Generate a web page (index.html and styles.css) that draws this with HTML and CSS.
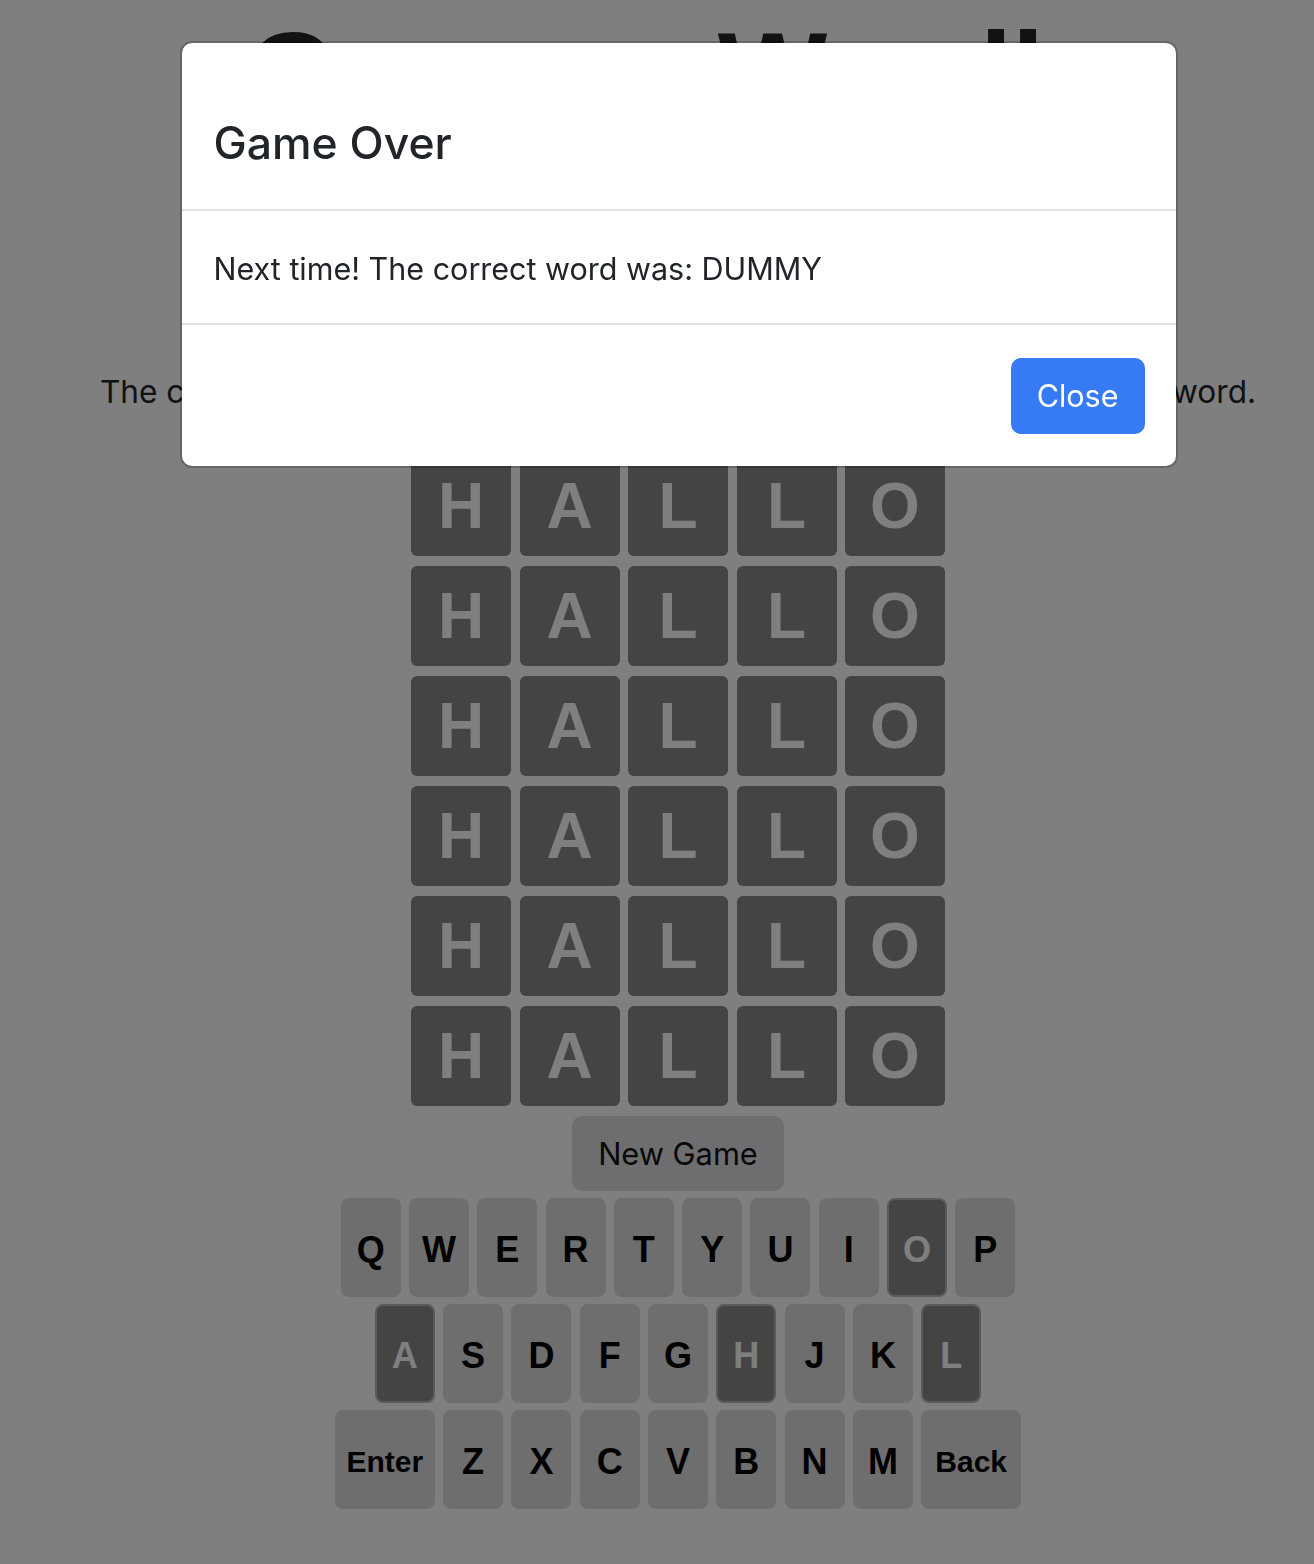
FILE: index.html
```html
<!DOCTYPE html>
<html lang="en">
<head>
<meta charset="utf-8">
<title>German Wordle</title>
<link rel="stylesheet" href="styles.css">
</head>
<body>
<div class="page">
  <h1 class="title">German Wordle</h1>
  <p class="intro">The computer has picked a random German five-letter word. Guess the word.</p>
  <div class="board">
    <div class="tile">H</div><div class="tile">A</div><div class="tile">L</div><div class="tile">L</div><div class="tile">O</div>
    <div class="tile">H</div><div class="tile">A</div><div class="tile">L</div><div class="tile">L</div><div class="tile">O</div>
    <div class="tile">H</div><div class="tile">A</div><div class="tile">L</div><div class="tile">L</div><div class="tile">O</div>
    <div class="tile">H</div><div class="tile">A</div><div class="tile">L</div><div class="tile">L</div><div class="tile">O</div>
    <div class="tile">H</div><div class="tile">A</div><div class="tile">L</div><div class="tile">L</div><div class="tile">O</div>
    <div class="tile">H</div><div class="tile">A</div><div class="tile">L</div><div class="tile">L</div><div class="tile">O</div>
  </div>
  <button class="new-game">New Game</button>
  <div class="keyboard">
    <div class="krow">
      <button class="key">Q</button><button class="key">W</button><button class="key">E</button><button class="key">R</button><button class="key">T</button><button class="key">Y</button><button class="key">U</button><button class="key">I</button><button class="key absent">O</button><button class="key">P</button>
    </div>
    <div class="krow">
      <button class="key absent">A</button><button class="key">S</button><button class="key">D</button><button class="key">F</button><button class="key">G</button><button class="key absent">H</button><button class="key">J</button><button class="key">K</button><button class="key absent">L</button>
    </div>
    <div class="krow">
      <button class="key wide">Enter</button><button class="key">Z</button><button class="key">X</button><button class="key">C</button><button class="key">V</button><button class="key">B</button><button class="key">N</button><button class="key">M</button><button class="key wide">Back</button>
    </div>
  </div>
</div>

<div class="backdrop"></div>

<div class="modal-wrap">
  <div class="modal">
    <div class="modal-header">
      <h2 class="modal-title">Game Over</h2>
    </div>
    <div class="modal-body">Next time! The correct word was: DUMMY</div>
    <div class="modal-footer">
      <button class="btn-close">Close</button>
    </div>
  </div>
</div>
</body>
</html>
```
FILE: styles.css
```css
* { box-sizing: border-box; }

html, body {
  margin: 0;
  padding: 0;
  background: #ffffff;
}

body {
  font-family: "Inter", "Noto Sans", sans-serif;
  color: #212529;
  width: 1314px;
  height: 1564px;
  overflow: hidden;
}

.page {
  padding: 7px 0 0 42px;
  display: flex;
  flex-direction: column;
  align-items: center;
}

.title {
  margin: 0;
  font-family: "Liberation Sans", Arial, sans-serif;
  font-weight: 700;
  font-size: 116px;
  line-height: 134px;
  color: #212529;
  white-space: nowrap;
}

.intro {
  margin: 227px 0 0;
  font-size: 31.6px;
  line-height: 48px;
  white-space: nowrap;
}

.board {
  margin-top: 40px;
  display: grid;
  grid-template-columns: repeat(5, 100px);
  grid-auto-rows: 100px;
  column-gap: 8.5px;
  row-gap: 10px;
}

.tile {
  background: #888888;
  border-radius: 6px;
  color: #ffffff;
  font-family: "Liberation Sans", Arial, sans-serif;
  font-weight: 700;
  font-size: 64px;
  display: flex;
  align-items: center;
  justify-content: center;
}

.new-game {
  margin-top: 10px;
  height: 75px;
  padding: 0 26px;
  border: none;
  border-radius: 10px;
  background: #dcdde0;
  color: #111111;
  font-family: "Inter", sans-serif;
  font-size: 30.8px;
  line-height: 75px;
}

.keyboard {
  margin-top: 7px;
  display: flex;
  flex-direction: column;
  gap: 7px;
}

.krow {
  display: flex;
  justify-content: center;
  gap: 8.3px;
}

.key {
  width: 60px;
  height: 99px;
  padding: 4px 0 0;
  border: none;
  border-radius: 8px;
  background: #dcdcdc;
  color: #000000;
  font-family: "Liberation Sans", Arial, sans-serif;
  font-weight: 700;
  font-size: 36px;
  display: flex;
  align-items: center;
  justify-content: center;
}

.key.wide {
  width: 100px;
  font-size: 30px;
}

.key.absent {
  background: #888888;
  color: #ffffff;
  border: 2px solid #b6b6b6;
  padding-top: 4px;
}

.backdrop {
  position: fixed;
  inset: 0;
  background: rgba(0, 0, 0, 0.5);
}

.modal-wrap {
  position: fixed;
  inset: 0;
  padding: 41px 0 0 43px;
  display: flex;
  justify-content: center;
  align-items: flex-start;
}

.modal {
  width: 998px;
  background: #ffffff;
  border: 2px solid rgba(0, 0, 0, 0.2);
  border-radius: 12px;
  background-clip: padding-box;
}

.modal-header {
  padding: 73px 32px 39px;
  border-bottom: 2px solid #dee2e6;
}

.modal-title {
  margin: 0;
  font-size: 44.5px;
  font-weight: 500;
  line-height: 54px;
  color: #212529;
}

.modal-body {
  padding: 34px 32px 30px;
  font-size: 30.5px;
  line-height: 48px;
  color: #212529;
}

.modal-footer {
  border-top: 2px solid #dee2e6;
  padding: 33px 31px 32px;
  display: flex;
  justify-content: flex-end;
}

.btn-close {
  padding: 12px 24px;
  border: 2px solid #367af6;
  border-radius: 10px;
  background: #367af6;
  color: #ffffff;
  font-family: "Inter", sans-serif;
  font-size: 30.5px;
  line-height: 48px;
}
```
